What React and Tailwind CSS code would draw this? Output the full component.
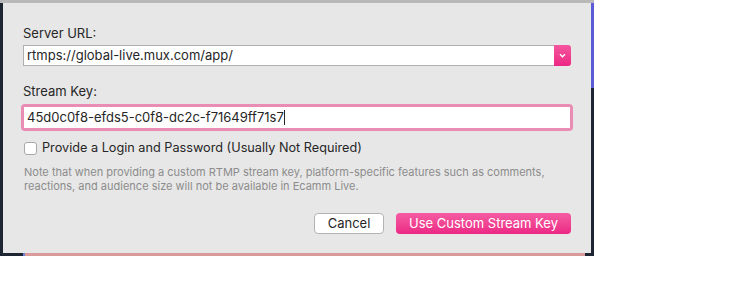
export default function App() {
  return (
    <div className="w-[737px] h-[307px] bg-white" style={{ fontFamily: 'Inter, "Liberation Sans", sans-serif' }}>
      <div className="relative w-[594px] h-[256px] bg-[#1f2633] pt-[3px] pl-[3px]">
        <div className="absolute left-0 top-0 w-[594px] h-[3px] bg-[#b9b9b9]" />
        <div className="absolute right-0 top-[3px] w-[3px] h-[85px] bg-[#5c5cd6]" />
        <div className="absolute left-[23px] bottom-0 w-[2px] h-[3px] bg-[#6f80d8]" />
        <div className="absolute left-[25px] bottom-0 w-[560px] h-[3px] bg-[#d99a9a]" />
        <div className="w-[588px] h-[250px] bg-[#e7e7e7] px-5 pt-[18px] text-[13px] text-[#262626]">
          <div className="leading-[24px]">Server URL:</div>
          <div className="flex h-[21px] w-[548px]">
            <div className="flex-1 border border-[#b0b0b0] border-r-0 bg-white pl-[3px] leading-[19px]">rtmps://global-live.mux.com/app/</div>
            <div className="w-[17px] rounded-r-[3px] bg-gradient-to-b from-[#f5559e] to-[#ec2584] flex items-center justify-center">
              <svg width="7" height="5" viewBox="0 0 7 5" fill="none" stroke="white" strokeWidth="1.4">
                <path d="M1 1.2l2.5 2.5 2.5-2.5" />
              </svg>
            </div>
          </div>
          <div className="mt-[13px] leading-[24px]">Stream Key:</div>
          <div className="mt-[1px] -ml-[2px] w-[552px] h-[27px] rounded-[4px] bg-[#ea8db4] p-[3px]">
            <div className="h-[21px] bg-white pl-[3px] leading-[21px] flex items-center">
              <span>45d0c0f8-efds5-c0f8-dc2c-f71649ff71s7</span>
              <span className="w-px h-[15px] bg-[#262626]" />
            </div>
          </div>
          <div className="mt-[10px] flex items-center gap-[5px] pl-[1px]">
            <div className="w-[13px] h-[13px] rounded-[3px] border border-[#a8a8a8] bg-white" />
            <span className="leading-[14px] text-[12.7px]">Provide a Login and Password (Usually Not Required)</span>
          </div>
          <div className="mt-[10px] pl-[1px] text-[11px] leading-[14px] text-[#8c8c8c]">
            Note that when providing a custom RTMP stream key, platform-specific features such as comments,<br />
            reactions, and audience size will not be available in Ecamm Live.
          </div>
          <div className="mt-[20px] flex justify-end gap-3 pr-0">
            <div className="w-[70px] h-[21px] rounded-[4px] border border-[#b3b3b3] bg-white text-center leading-[19px]">Cancel</div>
            <div className="w-[175px] h-[21px] rounded-[4px] bg-gradient-to-b from-[#f55ba2] to-[#ec2685] text-white text-center leading-[21px]">Use Custom Stream Key</div>
          </div>
        </div>
      </div>
    </div>
  )
}
